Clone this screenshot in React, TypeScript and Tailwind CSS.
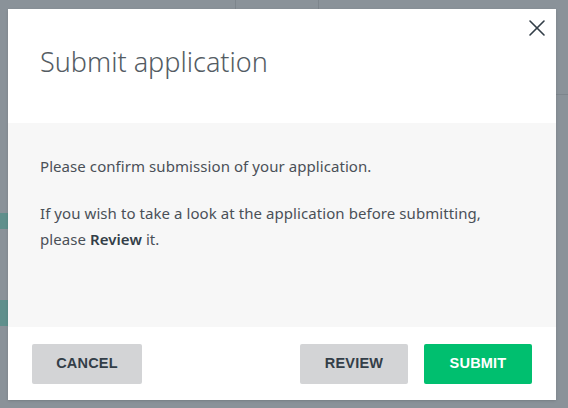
import { X } from "lucide-react";

export default function App() {
  return (
    <div
      className="relative h-[408px] w-[568px] overflow-hidden bg-[#8a9299]"
      style={{ fontFamily: '"Noto Sans", "Open Sans", sans-serif' }}
    >
      {/* faint page behind the backdrop */}
      <div className="absolute left-[235px] top-0 h-[9px] w-px bg-[#7d858c]" />
      <div className="absolute left-[318px] top-0 h-[9px] w-px bg-[#7d858c]" />
      <div className="absolute left-0 top-[213px] h-[16px] w-[8px] bg-[#5f8f8c]" />
      <div className="absolute left-0 top-[300px] h-[26px] w-[8px] bg-[#5f8f8c]" />
      <div className="absolute right-0 top-[94px] h-px w-[12px] bg-[#7d858c]" />

      <div className="absolute left-[8px] top-[9px] flex h-[391px] w-[548px] flex-col bg-white shadow-sm">
        <button
          type="button"
          className="absolute right-[5px] top-[5px] text-[#333e48]"
        >
          <X size={28} strokeWidth={1.4} />
        </button>

        <div className="flex h-[114px] shrink-0 items-start px-[32px] pt-[35px]">
          <h2 className="text-[27px] font-light leading-[36px] text-[#545c63]">
            Submit application
          </h2>
        </div>

        <div className="flex h-[204px] shrink-0 flex-col gap-[21px] bg-[#f7f7f7] px-[32px] pt-[30px] text-[15px] leading-[26px] tracking-[0.07px] text-[#4a5057]">
          <p>Please confirm submission of your application.</p>
          <p>
            If you wish to take a look at the application before submitting,
            <br />
            please <span className="font-semibold text-[#333e48]">Review</span> it.
          </p>
        </div>

        <div
          className="flex flex-1 items-start px-[24px] pt-[17px] text-[14.5px] font-bold tracking-[0.2px]"
          style={{ fontFamily: '"Liberation Sans", Arial, sans-serif' }}
        >
          <button
            type="button"
            className="h-[40px] w-[110px] rounded-[2px] bg-[#d3d4d6] text-[#333e48]"
          >
            CANCEL
          </button>
          <div className="flex-1" />
          <button
            type="button"
            className="h-[40px] w-[108px] rounded-[2px] bg-[#d3d4d6] text-[#333e48]"
          >
            REVIEW
          </button>
          <button
            type="button"
            className="ml-[16px] h-[40px] w-[108px] rounded-[2px] bg-[#00bf6f] text-white"
          >
            SUBMIT
          </button>
        </div>
      </div>
    </div>
  );
}
